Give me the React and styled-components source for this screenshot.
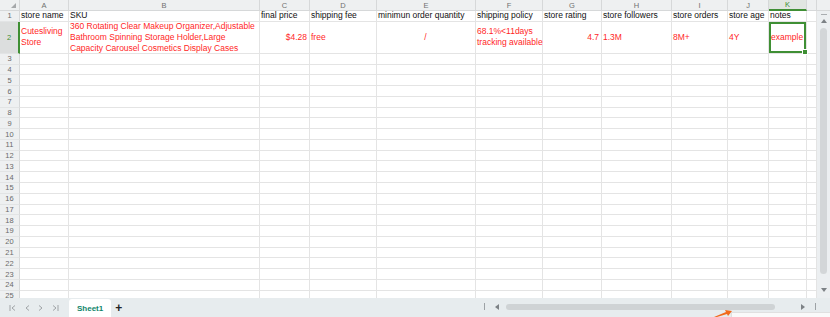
import React from 'react';
import styled, { createGlobalStyle, css } from 'styled-components';

const GlobalStyle = createGlobalStyle`
  html, body {
    margin: 0;
    padding: 0;
    background: #ffffff;
  }
  body {
    font-family: 'Liberation Sans', Arial, sans-serif;
  }
`;

const ROW_H = 10.77;
const COLS = [49, 191, 50, 67, 99, 67, 59, 70, 56, 41, 38];
const LETTERS = ['A', 'B', 'C', 'D', 'E', 'F', 'G', 'H', 'I', 'J', 'K', ''];
const GREEN = '#3f8f34';
const RED = '#ff1f1f';

const header = [
  'store name',
  'SKU',
  'final price',
  'shipping fee',
  'minimun order quantity',
  'shipping policy',
  'store rating',
  'store followers',
  'store orders',
  'store age',
  'notes',
  '',
];

const dataRow = [
  { text: 'Cutesliving\nStore' },
  {
    text:
      '360 Rotating Clear Makeup Organizer,Adjustable\nBathroom Spinning Storage Holder,Large\nCapacity Carousel Cosmetics Display Cases',
  },
  { text: '$4.28', align: 'right' },
  { text: 'free' },
  { text: '/', align: 'center' },
  { text: '68.1%<11days\ntracking available' },
  { text: '4.7', align: 'right' },
  { text: '1.3M' },
  { text: '8M+' },
  { text: '4Y' },
  { text: 'example', selected: true },
  { text: '' },
];

const Page = styled.div`
  width: 830px;
  height: 317px;
  display: flex;
  flex-direction: column;
  overflow: hidden;
  position: relative;
`;

const Main = styled.div`
  flex: 1;
  display: flex;
  min-height: 0;
`;

const Sheet = styled.div`
  width: 817px;
  display: grid;
  grid-template-columns: 20px ${COLS.map((c) => `${c}px`).join(' ')} 1fr;
  grid-auto-rows: ${ROW_H}px;
  align-content: start;
  overflow: hidden;
  font-size: 8.5px;
`;

const Corner = styled.div`
  background: #eef0f1;
  border-right: 1px solid #d6d8d9;
  border-bottom: 1px solid #d6d8d9;
  display: flex;
  align-items: flex-end;
  justify-content: flex-end;
  padding: 0 3px 2px 0;
`;

const ColHead = styled.div`
  background: ${({ active }) => (active ? '#e1e6e2' : '#eef0f1')};
  color: ${({ active }) => (active ? GREEN : '#707070')};
  border-right: 1px solid #d6d8d9;
  border-bottom: ${({ active }) => (active ? `2px solid ${GREEN}` : '1px solid #d6d8d9')};
  font-size: 7.5px;
  display: flex;
  align-items: center;
  justify-content: center;
  padding-top: 1px;
`;

const RowHead = styled.div`
  background: ${({ active }) => (active ? '#dcdede' : '#eef0f1')};
  color: ${({ active }) => (active ? GREEN : '#6a6a6a')};
  border-right: ${({ active }) => (active ? `2px solid ${GREEN}` : '1px solid #d6d8d9')};
  border-bottom: 1px solid #e2e4e5;
  font-size: 7.5px;
  display: flex;
  align-items: center;
  justify-content: center;
`;

const Cell = styled.div`
  position: relative;
  border-right: 1px solid #e4e4e4;
  border-bottom: 1px solid #e4e4e4;
  color: ${({ red }) => (red ? RED : '#111')};
  display: flex;
  align-items: center;
  justify-content: ${({ align }) =>
    align === 'right' ? 'flex-end' : align === 'center' ? 'center' : 'flex-start'};
  text-align: ${({ align }) => align || 'left'};
  padding: 0 2px 0 1px;
  white-space: pre;
  line-height: 10.8px;
  min-width: 0;
  ${({ tall }) =>
    tall &&
    css`
      grid-row: span 3;
    `}
  ${({ selected }) =>
    selected &&
    css`
      box-shadow: inset 0 0 0 2px ${GREEN};
      padding-left: 2px;
      &::after {
        content: '';
        position: absolute;
        right: -2px;
        bottom: -2px;
        width: 4px;
        height: 4px;
        background: ${GREEN};
        border: 1px solid #fff;
        z-index: 2;
      }
    `}
`;

const VScroll = styled.div`
  width: 13px;
  display: flex;
  flex-direction: column;
  background: #eceff1;
`;

const VCap = styled.div`
  height: ${ROW_H}px;
  background: #eef0f1;
  border-bottom: 1px solid #d6d8d9;
  box-sizing: border-box;
`;

const VTrack = styled.div`
  flex: 1;
  display: flex;
  flex-direction: column;
  align-items: center;
  padding: 3px 0 6px;
  gap: 4px;
`;

const Dash = styled.div`
  width: 6px;
  height: 1px;
  background: #a9adb0;
`;

const VThumb = styled.div`
  width: 7px;
  flex: 1;
  margin: 1px 0 10px;
  background: #d3d6d8;
  border-radius: 4px;
`;

const BottomBar = styled.div`
  height: 19px;
  background: #e7ecee;
  display: flex;
  align-items: stretch;
  position: relative;
`;

const Nav = styled.div`
  width: 69px;
  display: flex;
  align-items: center;
  padding-left: 9px;
  gap: 6px;
  box-sizing: border-box;
`;

const Tab = styled.div`
  margin-top: 1px;
  background: #ffffff;
  color: #11856b;
  font-weight: bold;
  font-size: 8px;
  display: flex;
  align-items: center;
  padding: 0 8px;
  border-radius: 3px 3px 0 0;
`;

const AddTab = styled.div`
  display: flex;
  align-items: center;
  padding-left: 4px;
  color: #222;
  font-size: 12px;
  font-weight: bold;
`;

const HScroll = styled.div`
  margin-left: auto;
  width: 346px;
  display: flex;
  align-items: center;
  padding: 0 14px 2px 0;
  box-sizing: border-box;
`;

const Sep = styled.div`
  width: 1px;
  height: 7px;
  background: #9da2a5;
`;

const Gap = styled.div`
  width: 10px;
`;

const HThumb = styled.div`
  width: 269px;
  height: 6px;
  border-radius: 3px;
  background: #cfd3d5;
  margin: 0 26px 0 7px;
`;

const Popup = styled.div`
  position: absolute;
  left: 731px;
  right: 0;
  bottom: 0;
  height: 4px;
  background: #fafafa;
  border-top: 1px solid #e0e0e0;
  border-left: 1px solid #e0e0e0;
`;

const Pointer = styled.svg`
  position: absolute;
  left: 713px;
  bottom: 0;
`;

const Tri = ({ dir = 'up' }) => {
  const pts = {
    up: '0,4 3,0 6,4',
    down: '0,0 6,0 3,4',
    left: '4,0 4,6 0,3',
    right: '0,0 4,3 0,6',
  };
  const w = dir === 'up' || dir === 'down' ? 6 : 4;
  const h = dir === 'up' || dir === 'down' ? 4 : 6;
  return (
    <svg width={w} height={h} viewBox={`0 0 ${w} ${h}`}>
      <polygon points={pts[dir]} fill="#7d8286" />
    </svg>
  );
};

const Chev = ({ left, bar }) => (
  <svg width="8" height="8" viewBox="0 0 8 8">
    {bar && <line x1={left ? 1 : 7} y1="1" x2={left ? 1 : 7} y2="7" stroke="#a0a4a7" strokeWidth="1" />}
    <polyline
      points={left ? '6,1.5 3,4 6,6.5' : '2,1.5 5,4 2,6.5'}
      fill="none"
      stroke="#a0a4a7"
      strokeWidth="1"
    />
  </svg>
);

const emptyRows = Array.from({ length: 23 }, (_, i) => i + 3);

const App = () => (
  <Page>
    <GlobalStyle />
    <Main>
      <Sheet>
        <Corner>
          <svg width="5" height="5" viewBox="0 0 5 5">
            <polygon points="5,0 5,5 0,5" fill="#a5a8aa" />
          </svg>
        </Corner>
        {LETTERS.map((l, i) => (
          <ColHead key={`h${i}`} active={l === 'K'}>
            {l}
          </ColHead>
        ))}

        <RowHead>1</RowHead>
        {header.map((t, i) => (
          <Cell key={`r1${i}`}>{t}</Cell>
        ))}

        <RowHead active style={{ gridRow: 'span 3' }}>
          2
        </RowHead>
        {dataRow.map((c, i) => (
          <Cell key={`r2${i}`} tall red align={c.align} selected={c.selected}>
            {c.text}
          </Cell>
        ))}

        {emptyRows.map((r) => (
          <React.Fragment key={r}>
            <RowHead>{r}</RowHead>
            {LETTERS.map((_, i) => (
              <Cell key={i} />
            ))}
          </React.Fragment>
        ))}
      </Sheet>
      <VScroll>
        <VCap />
        <VTrack>
          <Dash />
          <Tri dir="up" />
          <VThumb />
          <Tri dir="down" />
        </VTrack>
      </VScroll>
    </Main>
    <BottomBar>
      <Nav>
        <Chev left bar />
        <Chev left />
        <Chev />
        <Chev bar />
      </Nav>
      <Tab>Sheet1</Tab>
      <AddTab>+</AddTab>
      <HScroll>
        <Sep />
        <Gap />
        <Tri dir="left" />
        <HThumb />
        <Tri dir="right" />
        <Gap />
        <Sep />
      </HScroll>
      <Popup />
      <Pointer width="20" height="7" viewBox="0 0 20 7">
        <polygon points="1,7 13,2 12,0 19,1 15,6 14,4 4,7" fill="#f26a1b" />
      </Pointer>
    </BottomBar>
  </Page>
);

export default App;
